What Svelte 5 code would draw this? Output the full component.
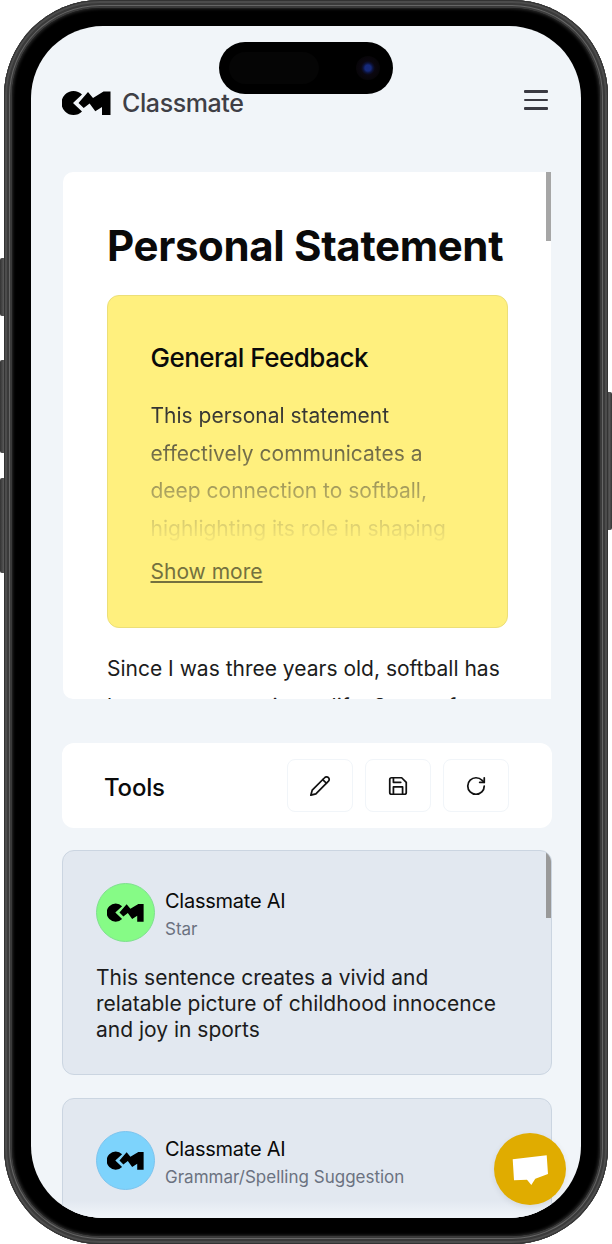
<script>
  const logoC = "M20 3.500A12 12 0 1 0 20 20.500L11 12Z";
  const logoM = "M16.500 12 26 1 31 7 41.500 0.500H48.500V24H40V16L33.300 20.300 27.600 12.500 21.700 17Z";

  const tools = [
    { label: "Edit", paths: ["M17 3a2.85 2.83 0 1 1 4 4L7.5 20.5 2 22l1.5-5.5Z", "m15 5 4 4"] },
    { label: "Save", paths: ["M19 21H5a2 2 0 0 1-2-2V5a2 2 0 0 1 2-2h11l5 5v11a2 2 0 0 1-2 2z", "M17 21v-8H7v8", "M7 3v5h8"] },
    { label: "Reload", paths: ["M21 12a9 9 0 1 1-9-9c2.52 0 4.93 1 6.74 2.74L21 8", "M21 3v5h-5"] }
  ];

  const comments = [
    {
      kind: "Star",
      color: "green",
      text: "This sentence creates a vivid and relatable picture of childhood innocence and joy in sports"
    },
    {
      kind: "Grammar/Spelling Suggestion",
      color: "blue",
      text: ""
    }
  ];
</script>

<div class="device">
  <span class="side s1"></span>
  <span class="side s2"></span>
  <span class="side s3"></span>
  <span class="side s4"></span>

  <div class="phone">
    <div class="bezel">
      <div class="screen">
        <div class="island">
          <span class="sensor"></span>
          <span class="camera"></span>
        </div>

        <header>
          <div class="brand">
            <svg class="logo" viewBox="0 0 49 25" aria-hidden="true">
              <path d={logoC} />
              <path d={logoM} />
            </svg>
            <span class="wordmark">Classmate</span>
          </div>
          <button class="menu" aria-label="Menu">
            <span></span>
            <span></span>
            <span></span>
          </button>
        </header>

        <section class="document">
          <i class="thumb"></i>
          <h1>Personal Statement</h1>
          <div class="general">
            <h2>General Feedback</h2>
            <p class="fade">
              This personal statement effectively communicates a deep connection to softball,
              highlighting its role in shaping
            </p>
            <a href="#more">Show more</a>
          </div>
          <p class="essay">
            Since I was three years old, softball has been a constant in my life. Some of
          </p>
        </section>

        <section class="tools">
          <h3>Tools</h3>
          <div class="actions">
            {#each tools as tool}
              <button aria-label={tool.label}>
                <svg viewBox="0 0 24 24" aria-hidden="true">
                  {#each tool.paths as d}
                    <path {d} />
                  {/each}
                </svg>
              </button>
            {/each}
          </div>
        </section>

        <section class="comments">
          {#each comments as item, i}
            <article class="comment">
              {#if i === 0}<i class="thumb"></i>{/if}
              <div class="who">
                <div class="avatar {item.color}">
                  <svg viewBox="0 0 49 25" aria-hidden="true">
                    <path d={logoC} />
                    <path d={logoM} />
                  </svg>
                </div>
                <div class="labels">
                  <div class="name">Classmate AI</div>
                  <div class="kind">{item.kind}</div>
                </div>
              </div>
              {#if item.text}<p>{item.text}</p>{/if}
            </article>
          {/each}
        </section>

        <div class="bottom-fade"></div>

        <button class="chat" aria-label="Chat">
          <svg viewBox="0 0 72 72" aria-hidden="true">
            <path d="M18.7 26.3 52.7 22.3 54 41 41.300 45.700 37.300 52 33 46.700 20 47.300Z" />
          </svg>
        </button>
      </div>
    </div>
  </div>
</div>

<style>
  :global(body) {
    margin: 0;
    background: #fff;
    font-family: Inter, "Liberation Sans", sans-serif;
  }

  .device {
    position: relative;
    width: 604px;
    height: 1244px;
    margin-left: 4px;
  }

  .side {
    position: absolute;
    background: linear-gradient(90deg, #333, #565656 60%, #333);
    border-radius: 2px;
  }
  .s1 { left: -4px; top: 258px; width: 6px; height: 58px; }
  .s2 { left: -4px; top: 360px; width: 6px; height: 93px; }
  .s3 { left: -4px; top: 478px; width: 6px; height: 95px; }
  .s4 { right: -4px; top: 392px; width: 6px; height: 138px; }

  .phone {
    position: relative;
    box-sizing: border-box;
    height: 100%;
    padding: 8px;
    background: #3a3a3a;
    border-radius: 96px;
    box-shadow:
      inset 0 0 0 1px #333,
      inset 0 0 0 3px #4c4c4c,
      inset 0 0 0 5px #3a3a3a,
      inset 0 0 0 6px #666;
  }

  .bezel {
    box-sizing: border-box;
    height: 100%;
    padding: 18px 19px;
    background: #000;
    border-radius: 88px;
    box-shadow: inset 0 0 3px 1px #2a2a2a;
  }

  .screen {
    position: relative;
    height: 100%;
    overflow: hidden;
    background: #f1f5f9;
    border-radius: 72px;
  }

  .island {
    position: absolute;
    left: 188px;
    top: 16px;
    width: 174px;
    height: 52px;
    background: #000;
    border-radius: 26px;
  }
  .sensor {
    position: absolute;
    left: 10px;
    top: 10px;
    width: 90px;
    height: 32px;
    background: #050505;
    border-radius: 16px;
  }
  .camera {
    position: absolute;
    left: 137px;
    top: 14px;
    width: 24px;
    height: 24px;
    border-radius: 50%;
    background: radial-gradient(circle, #16297a 0 3px, #0c1238 5px, #0b0710 7px, #070508 12px);
  }

  header {
    display: flex;
    justify-content: space-between;
    align-items: flex-start;
    height: 146px;
    box-sizing: border-box;
    padding: 64px 33px 0 31px;
  }
  .brand {
    display: flex;
    align-items: center;
    gap: 11px;
  }
  .logo {
    display: block;
    width: 49px;
    height: 25px;
  }
  .wordmark {
    font-size: 25px;
    font-weight: 500;
    letter-spacing: -0.4px;
    line-height: 26px;
    color: #3f3f46;
  }
  .menu {
    display: flex;
    flex-direction: column;
    gap: 6px;
    width: 24px;
    padding: 0;
    border: 0;
    background: none;
  }
  .menu span {
    height: 2.5px;
    background: #3a3a42;
    border-radius: 1px;
  }

  .thumb {
    position: absolute;
    top: 0;
    right: 0;
    width: 5px;
    background: #a6a6a6;
  }

  .document {
    position: relative;
    box-sizing: border-box;
    height: 527px;
    margin: 0 30px 0 32px;
    padding: 48px 43px 0 44px;
    overflow: hidden;
    background: #fff;
    border-radius: 10px 0 0 10px;
  }
  .document .thumb {
    height: 69px;
  }
  h1 {
    margin: 0 0 24px;
    font-size: 42px;
    line-height: 51px;
    font-weight: 700;
    letter-spacing: -0.35px;
    color: #0a0a0a;
    white-space: nowrap;
  }
  .general {
    box-sizing: border-box;
    height: 333px;
    padding: 46px 43px 0 42.5px;
    background: #fff07e;
    border: 1px solid #ecdf78;
    border-radius: 12px;
  }
  h2 {
    margin: 0 0 23px;
    font-size: 26px;
    line-height: 32px;
    font-weight: 500;
    letter-spacing: -0.5px;
    color: #0a0a0a;
  }
  .fade {
    height: 150px;
    margin: 0;
    overflow: hidden;
    font-size: 21px;
    line-height: 37.5px;
    color: #333;
    -webkit-mask-image: linear-gradient(#000 10%, transparent 100%);
    mask-image: linear-gradient(#000 10%, transparent 100%);
  }
  .general a {
    display: inline-block;
    margin-top: 10px;
    font-size: 21px;
    line-height: 30px;
    color: #74713f;
  }
  .essay {
    margin: 22px 0 0;
    font-size: 21px;
    line-height: 37.5px;
    color: #1c1c1c;
  }

  .tools {
    display: flex;
    justify-content: space-between;
    align-items: center;
    box-sizing: border-box;
    height: 85px;
    margin: 44px 29px 22px 31px;
    padding: 0 43px 0 42px;
    background: #fff;
    border-radius: 12px;
  }
  h3 {
    margin: 3px 0 0;
    font-size: 24px;
    font-weight: 500;
    letter-spacing: -0.2px;
    color: #0a0a0a;
  }
  .actions {
    display: flex;
    gap: 12px;
  }
  .actions button {
    display: flex;
    align-items: center;
    justify-content: center;
    width: 66px;
    height: 53px;
    padding: 0;
    background: #fff;
    border: 1px solid #f1f5f9;
    border-radius: 8px;
  }
  .actions svg {
    width: 22px;
    height: 22px;
    fill: none;
    stroke: #111;
    stroke-width: 1.9;
    stroke-linecap: round;
    stroke-linejoin: round;
  }

  .comments {
    display: flex;
    flex-direction: column;
    gap: 23px;
    margin: 0 29px 0 31px;
  }
  .comment {
    position: relative;
    box-sizing: border-box;
    height: 225px;
    padding: 32px 40px 0 33px;
    overflow: hidden;
    background: #e2e8f0;
    border: 1px solid #cbd5e1;
    border-radius: 12px;
  }
  .comment .thumb {
    height: 67px;
    background: #999;
  }
  .who {
    display: flex;
    align-items: center;
    gap: 10px;
  }
  .labels {
    padding-top: 2px;
  }
  .avatar {
    display: flex;
    align-items: center;
    justify-content: center;
    box-sizing: border-box;
    width: 59px;
    height: 59px;
    border-radius: 50%;
  }
  .avatar svg {
    display: block;
    width: 37px;
    height: 20px;
  }
  .green {
    background: #86fb86;
    border: 1px solid #7fe08f;
  }
  .blue {
    background: #7dd3fc;
    border: 1px solid #7cc4ee;
  }
  .name {
    font-size: 20px;
    line-height: 28px;
    font-weight: 400;
    letter-spacing: -0.25px;
    color: #0a0a0a;
  }
  .kind {
    margin-top: 2px;
    font-size: 17px;
    line-height: 24px;
    color: #6b7280;
  }
  .comment p {
    margin: 23px 0 0;
    font-size: 21px;
    line-height: 26px;
    color: #1c1c1c;
  }

  .bottom-fade {
    position: absolute;
    left: 0;
    right: 0;
    bottom: 0;
    height: 18px;
    background: linear-gradient(rgba(241, 245, 249, 0), #f1f5f9);
  }

  .chat {
    position: absolute;
    left: 463px;
    top: 1107px;
    width: 72px;
    height: 72px;
    padding: 0;
    border: 0;
    border-radius: 50%;
    background: #e0ac00;
    box-shadow: 0 2px 6px rgba(0, 0, 0, 0.08);
  }
  .chat svg {
    display: block;
    fill: #fff;
  }
</style>
